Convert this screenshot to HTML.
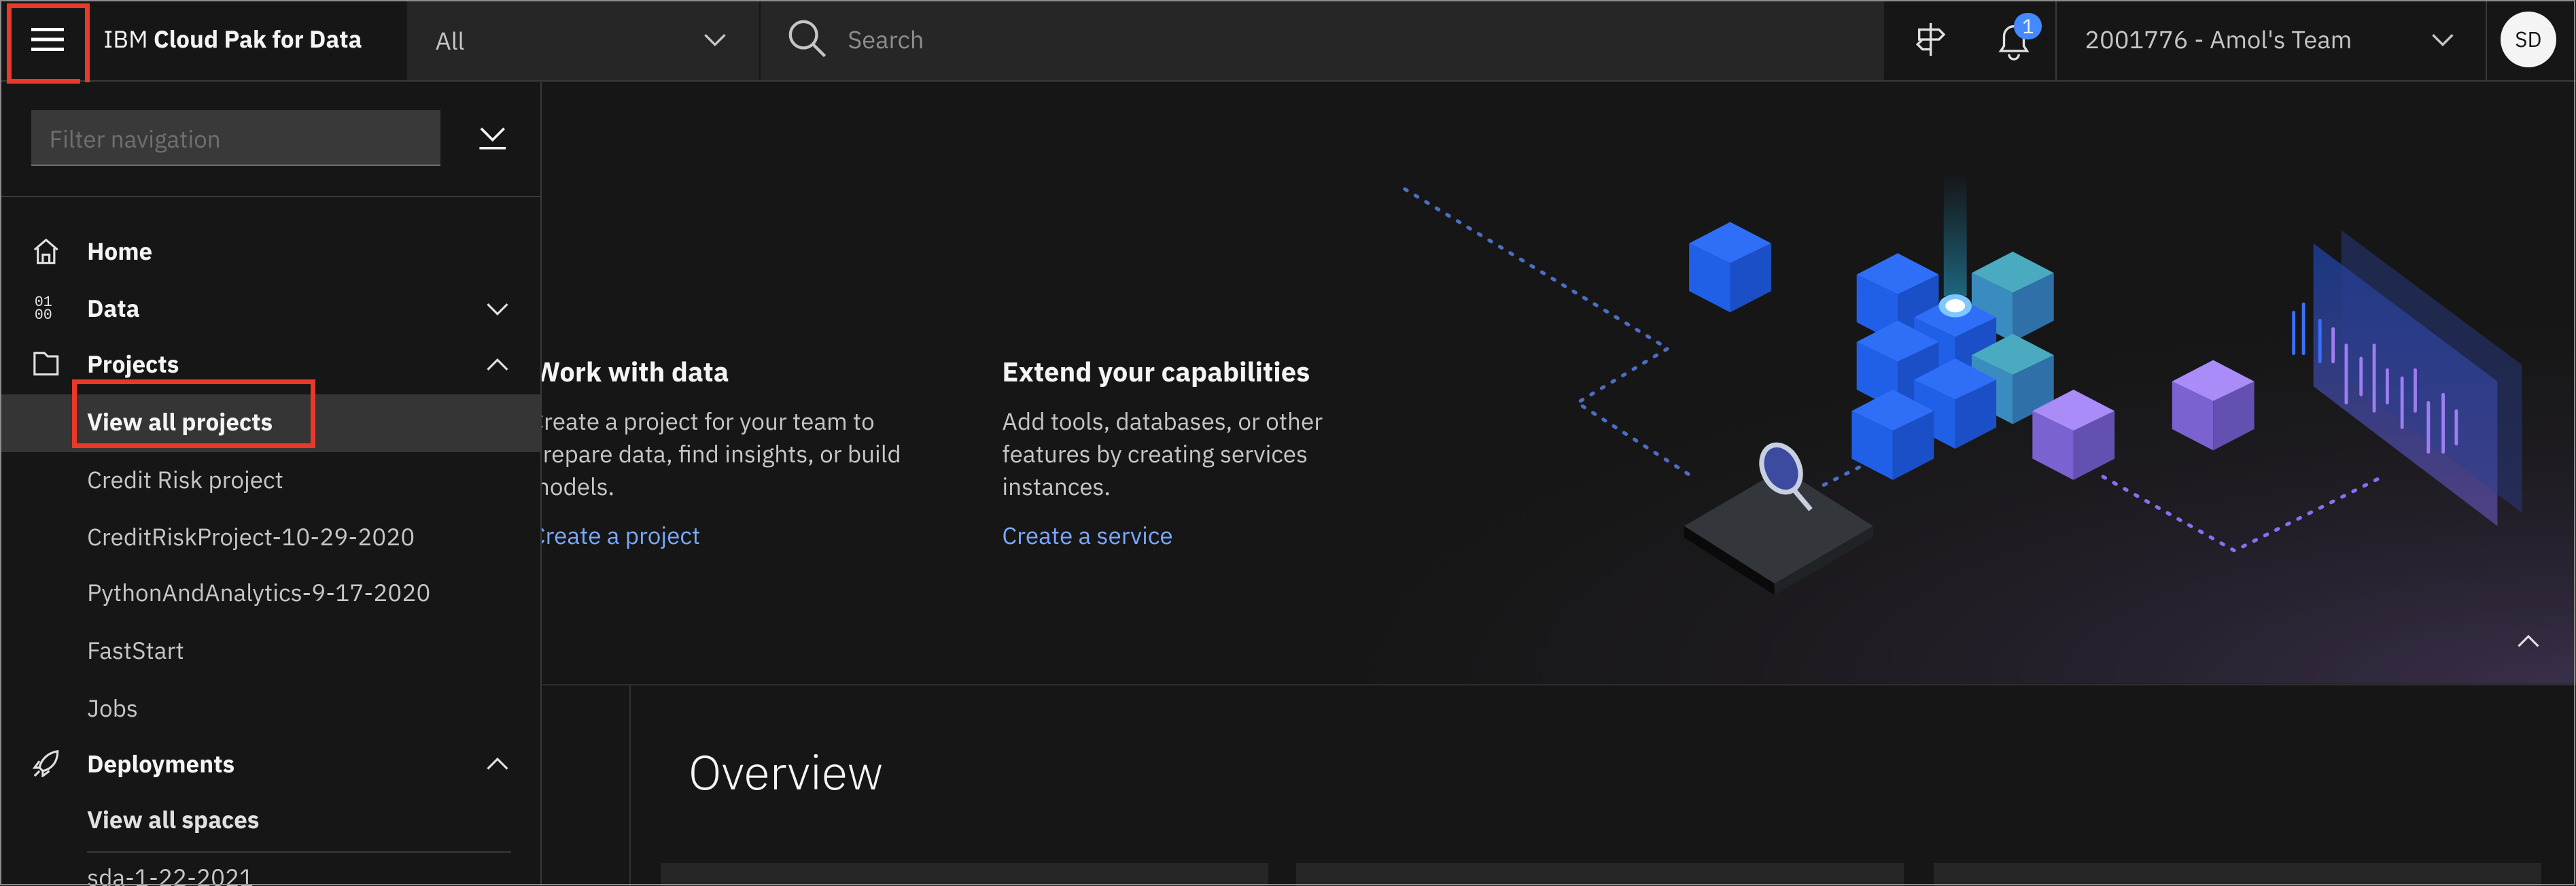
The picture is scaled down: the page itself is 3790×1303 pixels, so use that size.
<!DOCTYPE html>
<html><head><meta charset="utf-8">
<style>
html,body{margin:0;padding:0;background:#161616;overflow:hidden}
#w{position:relative;width:1568px;height:539px;zoom:2.4171;background:#161616;font-family:"IBM Plex Sans","Liberation Sans",sans-serif;color:#f4f4f4;overflow:hidden}
.a{position:absolute;white-space:nowrap}
.nav{font-size:14.5px;color:#c6c6c6}
.navb{font-size:14.5px;color:#f4f4f4;font-weight:bold}
</style></head><body><div id="w">
<!-- header -->
<div class="a" style="left:0;top:0;width:1568px;height:49px;background:#161616;border-bottom:1px solid #393939"></div>
<div class="a" style="left:248px;top:0;width:214px;height:49px;background:#262626"></div>
<div class="a" style="left:463px;top:0;width:684px;height:49px;background:#262626"></div>
<div class="a" style="left:4px;top:2px;width:45px;height:48px;border:3px solid #e8392a"></div>
<div class="a" style="left:19px;top:17px;width:20px;height:2px;background:#fff;box-shadow:0 6px 0 #fff,0 12px 0 #fff"></div>
<div class="a" style="left:63px;top:14px;font-size:14.5px;color:#f4f4f4">IBM <b>Cloud Pak for Data</b></div>
<div class="a" style="left:265px;top:15px;font-size:15px;color:#c6c6c6">All</div>
<svg class="a" style="left:428px;top:18px" width="14" height="12"><path d="M1 3l6 6 6-6" stroke="#c6c6c6" fill="none" stroke-width="1.4"/></svg>
<svg class="a" style="left:479px;top:11px" width="26" height="26"><circle cx="10" cy="10" r="8" stroke="#c6c6c6" fill="none" stroke-width="1.8"/><path d="M16 16l7 7" stroke="#c6c6c6" stroke-width="1.8"/></svg>
<div class="a" style="left:516px;top:14px;font-size:15px;color:#8d8d8d">Search</div>
<svg class="a" style="left:1164px;top:12px" width="22" height="24"><path d="M11 2v20M4 6h12l3 3-3 3H4zM11 12H6l-3 3 3 3h5" stroke="#e0e0e0" fill="none" stroke-width="1.4"/></svg>
<svg class="a" style="left:1214px;top:12px" width="24" height="26"><path d="M4 19h16l-2-3v-6a6 6 0 0 0-12 0v6z M9 21a3 3 0 0 0 6 0" stroke="#e0e0e0" fill="none" stroke-width="1.4"/></svg>
<div class="a" style="left:1226px;top:8px;width:17px;height:16px;border-radius:8px;background:#4589ff;font-size:12px;text-align:center;line-height:16px">1</div>
<div class="a" style="left:1251px;top:0;width:1px;height:49px;background:#393939"></div>
<div class="a" style="left:1269px;top:14px;font-size:15px;color:#c6c6c6">2001776 - Amol's Team</div>
<svg class="a" style="left:1480px;top:18px" width="14" height="12"><path d="M1 3l6 6 6-6" stroke="#c6c6c6" fill="none" stroke-width="1.4"/></svg>
<div class="a" style="left:1513px;top:0;width:1px;height:49px;background:#393939"></div>
<div class="a" style="left:1522px;top:7px;width:34px;height:34px;border-radius:17px;background:#f4f4f4;color:#161616;font-size:13px;text-align:center;line-height:34px">SD</div>

<!-- banner graphic -->
<svg class="a" style="left:330px;top:50px" width="1238" height="366" viewBox="330 50 1238 366">
<defs>
<radialGradient id="g1" cx="1" cy="1" r="0.7"><stop offset="0" stop-color="#3a2f4a"/><stop offset="1" stop-color="#161616" stop-opacity="0"/></radialGradient>
<linearGradient id="sc" x1="0" y1="0" x2="0" y2="1"><stop offset="0" stop-color="#1b3f9a"/><stop offset="1" stop-color="#5a4a9a"/></linearGradient>
<linearGradient id="bm" x1="0" y1="0" x2="0" y2="1"><stop offset="0" stop-color="#1f6a8a" stop-opacity="0"/><stop offset="1" stop-color="#1f7a9a" stop-opacity="0.8"/></linearGradient>
<g id="cb"><path d="M0-25L25-12L0 0L-25-12Z" fill="#2f6ff8"/><path d="M-25-12L0 0V30L-25 17Z" fill="#2060e8"/><path d="M0 0L25-12V17L0 30Z" fill="#1a4fc8"/></g>
<g id="ct"><path d="M0-25L25-12L0 0L-25-12Z" fill="#4aaabf"/><path d="M-25-12L0 0V30L-25 17Z" fill="#3a8cc0"/><path d="M0 0L25-12V17L0 30Z" fill="#2f70a8"/></g>
<g id="cp"><path d="M0-25L25-12L0 0L-25-12Z" fill="#a98cf8"/><path d="M-25-12L0 0V30L-25 17Z" fill="#7a62d0"/><path d="M0 0L25-12V17L0 30Z" fill="#6450b0"/></g>
</defs>
<rect x="330" y="50" width="1238" height="366" fill="url(#g1)"/>
<g fill="none" stroke-dasharray="1.5 6" stroke-linecap="round" stroke-width="2.2">
<path d="M855 115L1015 212L960 245L1030 290" stroke="#4a6fc0"/>
<path d="M1110 295L1140 280" stroke="#4a6fc0"/>
<path d="M1280 290L1360 335L1450 290" stroke="#8a6ff0"/>
</g>
<use href="#cb" x="1053" y="160"/>
<rect x="1183" y="105" width="14" height="75" fill="url(#bm)"/>
<use href="#cb" x="1155" y="179"/>
<use href="#ct" x="1225" y="178"/>
<use href="#cb" x="1190" y="205"/>
<use href="#cb" x="1155" y="220"/>
<use href="#ct" x="1225" y="228"/>
<use href="#cb" x="1190" y="243"/>
<use href="#cb" x="1152" y="262"/>
<ellipse cx="1190" cy="186" rx="10" ry="7" fill="#7ec8ff"/><ellipse cx="1190" cy="186" rx="6" ry="4" fill="#fff"/>
<use href="#cp" x="1262" y="262"/>
<use href="#cp" x="1347" y="244"/>
<path d="M1025 320L1085 285L1140 320L1080 355Z" fill="#33373b"/><path d="M1025 320L1080 355V362L1025 327Z" fill="#0a0a0a"/><path d="M1080 355L1140 320V327L1080 362Z" fill="#202326"/>
<ellipse cx="1084" cy="285" rx="11" ry="15" fill="#3c4aa0" stroke="#c8d0e0" stroke-width="3" transform="rotate(-25 1084 285)"/>
<path d="M1091 297L1102 310" stroke="#c8d0e0" stroke-width="3"/>
<path d="M1408 148L1520 232V320L1408 235Z" fill="url(#sc)" opacity="0.8"/>
<path d="M1425 140L1535 222V312L1425 228Z" fill="#2a3f90" opacity="0.45"/>
<g stroke-width="2" stroke-linecap="round">
<path d="M1396 190v25M1402 185v30M1412 195v25" stroke="#3a6ff8"/>
<path d="M1420 200v20M1428 210v35M1437 218v22M1445 210v40M1453 225v20M1462 230v30M1470 225v25M1478 245v30M1487 240v35M1495 250v20" stroke="#9d7ef0"/>
</g>
</svg>
<svg class="a" style="left:1532px;top:385px" width="14" height="10"><path d="M1 8l6-6 6 6" stroke="#e0e0e0" fill="none" stroke-width="1.3"/></svg>

<div class="a" style="left:325px;top:215px;font-size:16.5px;font-weight:bold">Work with data</div>
<div class="a" style="left:322px;top:246px;font-size:14.5px;line-height:20px;color:#c6c6c6">Create a project for your team to<br>prepare data, find insights, or build<br>models.</div>
<div class="a" style="left:323px;top:316px;font-size:14.5px;color:#78a9ff">Create a project</div>
<div class="a" style="left:610px;top:215px;font-size:16.5px;font-weight:bold">Extend your capabilities</div>
<div class="a" style="left:610px;top:246px;font-size:14.5px;line-height:20px;color:#c6c6c6">Add tools, databases, or other<br>features by creating services<br>instances.</div>
<div class="a" style="left:610px;top:316px;font-size:14.5px;color:#78a9ff">Create a service</div>

<!-- lower -->
<div class="a" style="left:330px;top:416px;width:1238px;height:1px;background:#2e2e2e"></div>
<div class="a" style="left:383px;top:417px;width:1px;height:122px;background:#333"></div>
<div class="a" style="left:419px;top:451px;font-size:29px;font-weight:300;color:#f4f4f4">Overview</div>
<div class="a" style="left:402px;top:525px;width:370px;height:20px;background:#262626"></div>
<div class="a" style="left:789px;top:525px;width:370px;height:20px;background:#262626"></div>
<div class="a" style="left:1177px;top:525px;width:370px;height:20px;background:#262626"></div>

<!-- sidebar -->
<div class="a" style="left:0;top:50px;width:329px;height:489px;background:#161616;border-right:1px solid #393939"></div>
<div class="a" style="left:4px;top:48px;width:45px;height:3px;background:#e8392a"></div>
<div class="a" style="left:19px;top:67px;width:249px;height:33px;background:#393939;border-bottom:1px solid #6f6f6f"></div>
<div class="a" style="left:30px;top:75px;font-size:14.5px;color:#6f6f6f">Filter navigation</div>
<svg class="a" style="left:291px;top:76px" width="18" height="16"><path d="M2 2l7 7 7-7M1 14h16" stroke="#f4f4f4" fill="none" stroke-width="1.5"/></svg>
<div class="a" style="left:0;top:119px;width:329px;height:1px;background:#393939"></div>
<svg class="a" style="left:19px;top:144px" width="18" height="18"><path d="M2 8L9 2l7 6M4 7v9h10V7M7 16v-5h4v5" stroke="#e0e0e0" fill="none" stroke-width="1.3"/></svg>
<div class="a navb" style="left:53px;top:143px">Home</div>
<div class="a" style="left:21px;top:180px;font-size:9px;line-height:8px;color:#e0e0e0;font-family:'Liberation Mono',monospace">01<br>00</div>
<div class="a navb" style="left:53px;top:178px">Data</div>
<svg class="a" style="left:296px;top:182px" width="14" height="12"><path d="M1 3l6 6 6-6" stroke="#e0e0e0" fill="none" stroke-width="1.3"/></svg>
<svg class="a" style="left:19px;top:212px" width="18" height="18"><path d="M2 3h6l2 2h6v11H2z" stroke="#e0e0e0" fill="none" stroke-width="1.3"/></svg>
<div class="a navb" style="left:53px;top:212px">Projects</div>
<svg class="a" style="left:296px;top:216px" width="14" height="12"><path d="M1 9l6-6 6 6" stroke="#e0e0e0" fill="none" stroke-width="1.3"/></svg>
<div class="a" style="left:0;top:240px;width:329px;height:35px;background:#353535"></div>
<div class="a" style="left:44px;top:231px;width:142px;height:36px;border:3px solid #e8392a"></div>
<div class="a navb" style="left:53px;top:247px">View all projects</div>
<div class="a nav" style="left:53px;top:282px">Credit Risk project</div>
<div class="a nav" style="left:53px;top:317px">CreditRiskProject-10-29-2020</div>
<div class="a nav" style="left:53px;top:351px">PythonAndAnalytics-9-17-2020</div>
<div class="a nav" style="left:53px;top:386px">FastStart</div>
<div class="a nav" style="left:53px;top:421px">Jobs</div>
<svg class="a" style="left:19px;top:455px" width="18" height="18"><path d="M16 2C10 3 6 7 5 12l2 2c5-1 9-5 9-12zM5 12l-3 0 3-4M7 14v3l4-3M5 14l-3 3" stroke="#e0e0e0" fill="none" stroke-width="1.3"/></svg>
<div class="a navb" style="left:53px;top:455px">Deployments</div>
<svg class="a" style="left:296px;top:459px" width="14" height="12"><path d="M1 9l6-6 6 6" stroke="#e0e0e0" fill="none" stroke-width="1.3"/></svg>
<div class="a navb" style="left:53px;top:489px;color:#e0e0e0">View all spaces</div>
<div class="a" style="left:53px;top:518px;width:258px;height:1px;background:#393939"></div>
<div class="a nav" style="left:53px;top:524px">sda-1-22-2021</div>
<!-- frame -->
<div class="a" style="left:0;top:0;width:1566px;height:537px;border:1px solid #8d8d8d;pointer-events:none"></div>
</div></body></html>
